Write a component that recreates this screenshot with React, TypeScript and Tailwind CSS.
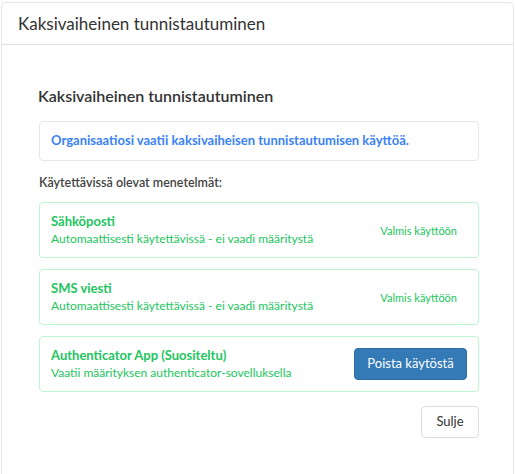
export default function App() {
  const methods = [
    { title: 'Sähköposti', desc: 'Automaattisesti käytettävissä - ei vaadi määritystä', status: 'Valmis käyttöön' },
    { title: 'SMS viesti', desc: 'Automaattisesti käytettävissä - ei vaadi määritystä', status: 'Valmis käyttöön' },
  ]
  return (
    <div className="w-[515px] h-[474px] bg-white pt-[2px] px-[1px]" style={{ fontFamily: "Lato, 'Noto Sans', sans-serif" }}>
      <div className="h-[472px] border-t border-x border-[#e5e5e5] rounded-t-[5px] flex flex-col">
        <div className="h-[42px] flex items-center pl-[16px] border-b border-[#e0e0e0]">
          <h2 className="text-[17px] text-[#333]">Kaksivaiheinen tunnistautuminen</h2>
        </div>
        <div className="pl-[37px] pr-[34px] pt-[39px]">
          <h3 className="text-[16px] font-semibold text-[#333] leading-[24px] -ml-[1px]">Kaksivaiheinen tunnistautuminen</h3>
          <div className="mt-[13px] h-[40px] border border-[#e5e7eb] rounded-[4px] flex items-center px-[11px]">
            <p className="text-[13px] font-bold text-[#3b82f6]">Organisaatiosi vaatii kaksivaiheisen tunnistautumisen käyttöä.</p>
          </div>
          <p className="mt-[13px] text-[12.5px] font-semibold text-[#444] leading-[18px]">Käytettävissä olevat menetelmät:</p>
          <div className="mt-[10px] flex flex-col gap-[11px]">
            {methods.map((m) => (
              <div key={m.title} className="h-[56px] border border-[#bbf7d0] rounded-[4px] flex items-center justify-between pl-[11px] pr-[21px]">
                <div className="text-[#22c55e] leading-[17px]">
                  <div className="font-bold text-[13px]">{m.title}</div>
                  <div className="text-[12px]">{m.desc}</div>
                </div>
                <span className="text-[11px] text-[#22c55e] mt-[2px]">{m.status}</span>
              </div>
            ))}
            <div className="h-[56px] border border-[#bbf7d0] rounded-[4px] flex items-center justify-between pl-[11px] pr-[11px]">
              <div className="text-[#22c55e] leading-[17px]">
                <div className="font-bold text-[13px]">Authenticator App (Suositeltu)</div>
                <div className="text-[12px]">Vaatii määrityksen authenticator-sovelluksella</div>
              </div>
              <button className="w-[113px] h-[32px] bg-[#337ab7] rounded-[4px] text-white text-[13px] border border-[#2e6da4]">Poista käytöstä</button>
            </div>
          </div>
          <div className="mt-[14px] flex justify-end">
            <button className="w-[58px] h-[32px] border border-[#ddd] rounded-[4px] text-[13px] text-[#333] bg-white">Sulje</button>
          </div>
        </div>
      </div>
    </div>
  )
}
